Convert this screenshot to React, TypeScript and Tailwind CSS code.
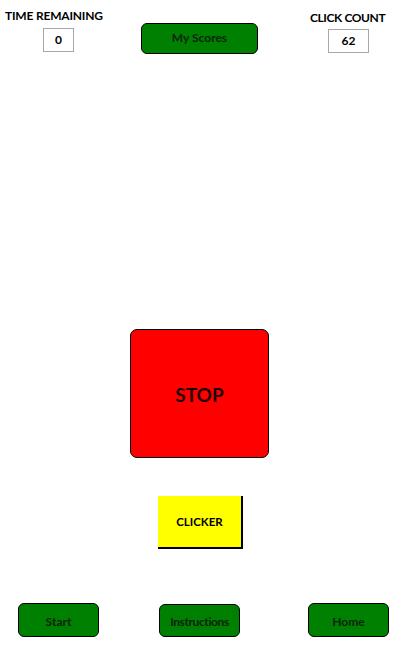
import React from 'react';

const font = { fontFamily: 'Lato, "Open Sans", sans-serif' };

const GreenButton = ({ label, className = '' }: { label: string; className?: string }) => (
  <button
    className={`flex items-center justify-center bg-[#008000] border border-black rounded-[6px] text-[12px] font-bold text-[#0b240b] ${className}`}
  >
    {label}
  </button>
);

const CounterBox = ({ value, className = '' }: { value: string; className?: string }) => (
  <div
    className={`flex items-center justify-center h-[24px] border border-[#a8a8a8] bg-white text-[12px] font-bold text-black ${className}`}
  >
    {value}
  </div>
);

export default function App() {
  return (
    <div className="w-[417px] h-[655px] bg-white flex flex-col" style={font}>
      {/* Top row: timer, scores button, click counter */}
      <div className="flex items-start h-[54px]">
        <div className="ml-[5px] w-[100px] pt-[9px] flex flex-col">
          <span className="whitespace-nowrap text-[12px] font-bold text-black leading-[14px] tracking-[-0.2px]">TIME REMAINING</span>
          <CounterBox value="0" className="ml-[38px] mt-[5px] w-[31px]" />
        </div>
        <GreenButton label="My Scores" className="ml-[36px] mt-[23px] w-[117px] h-[31px] pb-[2px]" />
        <div className="ml-[52px] pt-[11px] flex flex-col">
          <span className="whitespace-nowrap text-[12px] font-bold text-black leading-[14px] tracking-[-0.4px]">CLICK COUNT</span>
          <CounterBox value="62" className="ml-[18px] mt-[4px] w-[41px]" />
        </div>
      </div>

      {/* Stop square */}
      <div className="ml-[130px] mt-[275px] w-[139px] h-[129px] bg-[#ff0000] border border-black rounded-[7px] flex items-center justify-center">
        <span className="text-[19px] font-bold text-[#1f0000] mt-[3px]">STOP</span>
      </div>

      {/* Clicker */}
      <div className="ml-[158px] mt-[38px] w-[85px] h-[53px] bg-[#ffff00] border-r-2 border-b-2 border-black flex items-center justify-center">
        <span className="text-[11.5px] font-bold text-black">CLICKER</span>
      </div>

      {/* Bottom nav */}
      <div className="flex items-start mt-[54px]">
        <GreenButton label="Start" className="ml-[18px] w-[81px] h-[34px] pt-[4px]" />
        <GreenButton label="Instructions" className="ml-[60px] mt-[1px] w-[81px] h-[33px] pt-[3px] tracking-[-0.4px]" />
        <GreenButton label="Home" className="ml-[68px] w-[81px] h-[34px] pt-[4px]" />
      </div>
    </div>
  );
}
